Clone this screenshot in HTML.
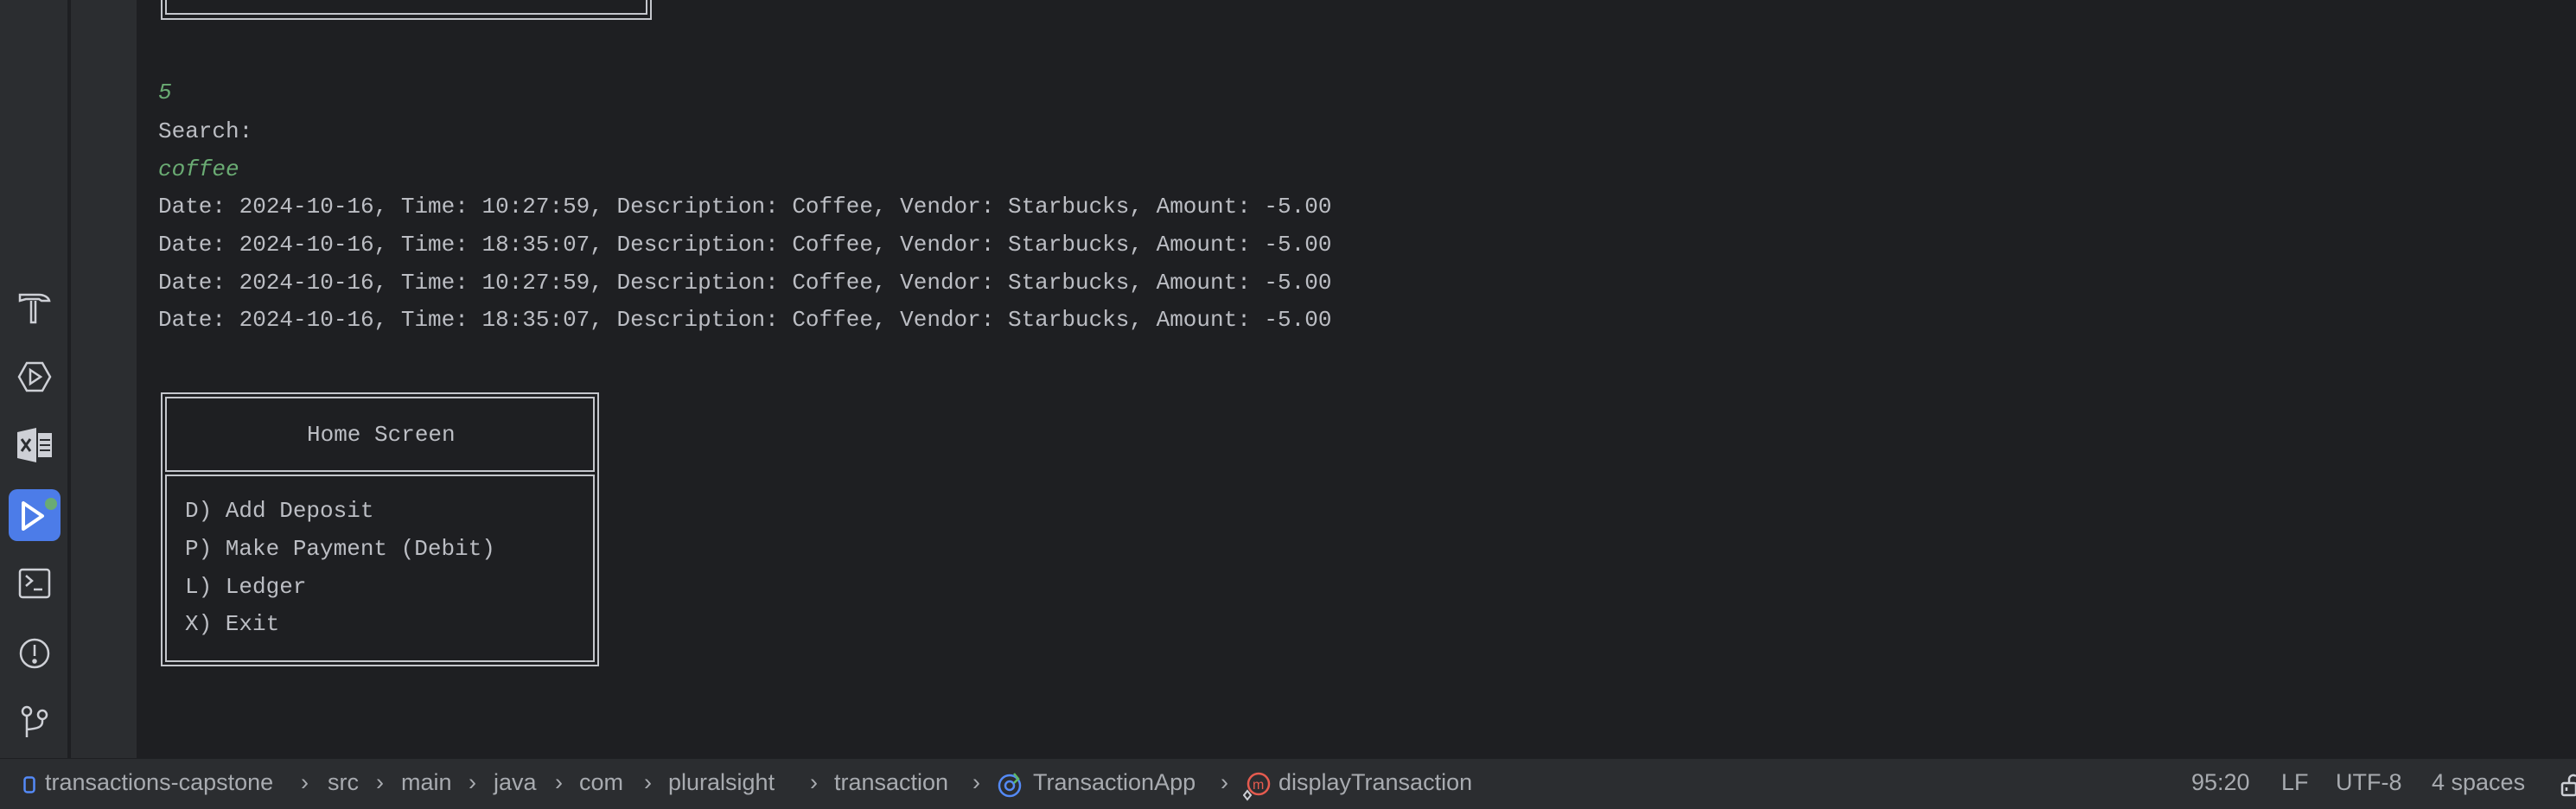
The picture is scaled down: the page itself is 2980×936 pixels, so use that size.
<!DOCTYPE html>
<html><head><meta charset="utf-8"><style>
*{margin:0;padding:0;box-sizing:border-box}
body{width:2980px;height:936px;background:#1e1f22;position:relative;overflow:hidden;font-family:"Liberation Mono",monospace;color:#bcbec4}
#tb{position:absolute;left:0;top:0;width:80px;height:877px;background:#2b2d30;border-right:2px solid #1e1f22}
#gut{position:absolute;left:82px;top:0;width:76px;height:877px;background:#2b2d30}
#status{position:absolute;left:0;top:877px;width:2980px;height:59px;background:#2b2d30;border-top:1px solid #1e1f22;font-family:"Liberation Sans",sans-serif;font-size:27px;color:#a8abb0}
.s{position:absolute;top:12px;white-space:nowrap}
.ln{position:absolute;left:183px;font-size:26px;line-height:44px;height:44px;white-space:pre}
.g{color:#6aab73;font-style:italic}
.dbl{position:absolute;border:2px solid #c4c6cc}
.ic{position:absolute}
</style></head><body>
<div id="tb"></div><div id="gut"></div>

<!-- top box remnant -->
<div class="dbl" style="left:186px;top:-10px;width:568px;height:33px;border-top:none"></div>
<div class="dbl" style="left:191px;top:-10px;width:558px;height:27px;border-top:none"></div>

<div class="ln g" style="top:85px">5</div>
<div class="ln" style="top:130px">Search:</div>
<div class="ln g" style="top:174px">coffee</div>
<div class="ln" style="top:217px">Date: 2024-10-16, Time: 10:27:59, Description: Coffee, Vendor: Starbucks, Amount: -5.00</div>
<div class="ln" style="top:261px">Date: 2024-10-16, Time: 18:35:07, Description: Coffee, Vendor: Starbucks, Amount: -5.00</div>
<div class="ln" style="top:305px">Date: 2024-10-16, Time: 10:27:59, Description: Coffee, Vendor: Starbucks, Amount: -5.00</div>
<div class="ln" style="top:348px">Date: 2024-10-16, Time: 18:35:07, Description: Coffee, Vendor: Starbucks, Amount: -5.00</div>

<!-- home box -->
<div class="dbl" style="left:186px;top:454px;width:507px;height:317px"></div>
<div class="dbl" style="left:191px;top:459px;width:497px;height:87px;border-bottom:2px solid #c4c6cc"></div>
<div class="dbl" style="left:191px;top:549px;width:497px;height:217px"></div>
<div class="ln" style="left:355px;top:481px">Home Screen</div>
<div class="ln" style="left:214px;top:569px">D) Add Deposit</div>
<div class="ln" style="left:214px;top:613px">P) Make Payment (Debit)</div>
<div class="ln" style="left:214px;top:657px">L) Ledger</div>
<div class="ln" style="left:214px;top:700px">X) Exit</div>

<!-- toolbar icons -->
<svg class="ic" style="left:20px;top:335px" width="40" height="40" viewBox="0 0 40 40" fill="none" stroke="#ced0d6" stroke-width="2.5"><path d="M3 6h22c6 0 11 3 12 7h-9l-3-2H10L3 13z"/><path d="M16 13v25h5V13"/></svg>
<svg class="ic" style="left:20px;top:416px" width="40" height="40" viewBox="0 0 40 40" fill="none" stroke="#ced0d6" stroke-width="2.5"><path d="M11 4h18l9 16-9 16H11L2 20z"/><path d="M15 12l12 8-12 8z"/></svg>
<svg class="ic" style="left:20px;top:495px" width="40" height="40" viewBox="0 0 40 40"><path d="M0 5l22-5v40L0 35z" fill="#ced0d6"/><rect x="24" y="6" width="16" height="28" fill="#ced0d6"/><path d="M5 13l10 14M15 13L5 27" stroke="#2b2d30" stroke-width="3"/><path d="M26 14h12M26 20h12M26 26h12" stroke="#2b2d30" stroke-width="2"/></svg>
<div class="ic" style="left:10px;top:566px;width:60px;height:60px;background:#4c7ce8;border-radius:10px"></div>
<svg class="ic" style="left:10px;top:566px" width="60" height="60" viewBox="0 0 60 60"><path d="M17 16v30l22-15z" fill="none" stroke="#fff" stroke-width="4" stroke-linejoin="round"/><circle cx="49" cy="17" r="7" fill="#6aab73"/></svg>
<svg class="ic" style="left:20px;top:656px" width="40" height="40" viewBox="0 0 40 40" fill="none" stroke="#ced0d6" stroke-width="2.5"><rect x="3" y="3" width="34" height="32" rx="3"/><path d="M10 10l7 6-7 6M19 26h10"/></svg>
<svg class="ic" style="left:20px;top:736px" width="40" height="40" viewBox="0 0 40 40" fill="none" stroke="#ced0d6" stroke-width="2.5"><circle cx="20" cy="20" r="16"/><path d="M20 10v13"/><circle cx="20" cy="29" r="1.5" fill="#ced0d6"/></svg>
<svg class="ic" style="left:20px;top:815px" width="40" height="40" viewBox="0 0 40 40" fill="none" stroke="#ced0d6" stroke-width="2.5"><circle cx="11" cy="8" r="5"/><circle cx="29" cy="12" r="5"/><path d="M11 13v25M29 17v3c0 6-5 8-18 9"/></svg>

<!-- status bar -->
<div id="status">
<svg class="ic" style="left:27px;top:20px" width="14" height="20"><rect x="1.5" y="1.5" width="11" height="17" rx="3" fill="none" stroke="#548af7" stroke-width="2.5"/></svg>
<span class="s" style="left:52px">transactions-capstone</span>
<span class="s" style="left:348px">›</span><span class="s" style="left:379px">src</span>
<span class="s" style="left:435px">›</span><span class="s" style="left:464px">main</span>
<span class="s" style="left:542px">›</span><span class="s" style="left:571px">java</span>
<span class="s" style="left:642px">›</span><span class="s" style="left:670px">com</span>
<span class="s" style="left:745px">›</span><span class="s" style="left:773px">pluralsight</span>
<span class="s" style="left:937px">›</span><span class="s" style="left:965px">transaction</span>
<span class="s" style="left:1125px">›</span>
<svg class="ic" style="left:1153px;top:14px" width="32" height="32" viewBox="0 0 32 32" fill="none"><circle cx="15" cy="17" r="12" stroke="#548af7" stroke-width="2.5"/><circle cx="15" cy="17" r="5" stroke="#548af7" stroke-width="2.5"/><path d="M20 3l5 6-5 5" stroke="#5fb865" stroke-width="2.5"/></svg>
<span class="s" style="left:1195px">TransactionApp</span>
<span class="s" style="left:1412px">›</span>
<svg class="ic" style="left:1438px;top:14px" width="32" height="36" viewBox="0 0 32 36" fill="none"><circle cx="18" cy="15" r="12" stroke="#e55b4f" stroke-width="2.5"/><text x="11" y="21" font-family="Liberation Sans" font-size="16" fill="#e55b4f">m</text><path d="M5 23l4 5-4 5-4-5z" stroke="#ced0d6" stroke-width="2" fill="#2b2d30"/></svg>
<span class="s" style="left:1479px">displayTransaction</span>
<span class="s" style="left:2535px">95:20</span>
<span class="s" style="left:2639px">LF</span>
<span class="s" style="left:2702px">UTF-8</span>
<span class="s" style="left:2813px">4 spaces</span>
<svg class="ic" style="left:2962px;top:16px" width="18" height="30" viewBox="0 0 18 30" fill="none" stroke="#ced0d6" stroke-width="2.5"><rect x="2" y="12" width="16" height="14" rx="2"/><path d="M10 12V7a5 5 0 0 1 8-3"/><path d="M7 17v4"/></svg>
</div>
</body></html>
